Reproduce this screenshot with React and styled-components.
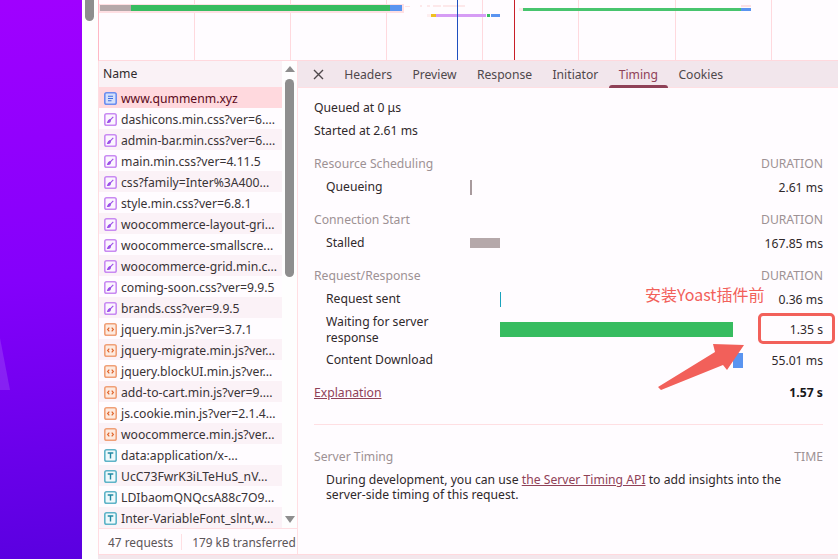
import React from "react";
import styled, { createGlobalStyle } from "styled-components";

const GlobalStyle = createGlobalStyle`
  html, body {
    margin: 0;
    padding: 0;
    height: 100%;
    overflow: hidden;
  }
  body {
    font-family: "Noto Sans", "Noto Sans CJK SC", sans-serif;
    font-size: 12.2px;
    color: #2c2528;
  }
`;

const Page = styled.div`
  display: flex;
  width: 838px;
  height: 559px;
  overflow: hidden;
  position: relative;
`;

const Backdrop = styled.div`
  width: 82px;
  flex: none;
  position: relative;
  overflow: hidden;
  background: linear-gradient(175deg, #a000ff 0%, #8400fb 50%, #5a00e0 100%);
`;

const BackdropShape = styled.div`
  position: absolute;
  left: -30px;
  top: 338px;
  width: 40px;
  height: 52px;
  background: rgba(255, 255, 255, 0.13);
  clip-path: polygon(75% 0, 100% 100%, 0 100%);
`;

const Gutter = styled.div`
  width: 16px;
  flex: none;
  background: #fefefe;
  padding: 0 4px 0 3px;
  box-sizing: border-box;
`;

const GutterThumb = styled.div`
  height: 21px;
  background: #8e8e8e;
  border-radius: 0 0 5px 5px;
`;

const Panel = styled.div`
  flex: 1;
  min-width: 0;
  display: flex;
  flex-direction: column;
  background: #fffcff;
`;

const Overview = styled.div`
  height: 60px;
  flex: none;
  border-left: 1px solid #ffb8c4;
  border-bottom: 1px solid #ffd9de;
  line-height: 0;
`;

const Split = styled.div`
  flex: 1;
  display: flex;
  min-height: 0;
  border-left: 1px solid #ffdde2;
`;

const Sidebar = styled.div`
  width: 199px;
  flex: none;
  display: flex;
  flex-direction: column;
  border-right: 1px solid #ffdfe3;
  box-sizing: border-box;
`;

const ListArea = styled.div`
  flex: 1;
  display: flex;
  min-height: 0;
`;

const NameColumn = styled.div`
  width: 183px;
  flex: none;
`;

const NameHeader = styled.div`
  height: 26px;
  line-height: 25px;
  padding-left: 4px;
  background: #faf2f6;
  color: #302a2c;
`;

const Row = styled.div`
  height: 21px;
  box-sizing: border-box;
  padding: 1px 0 0 5px;
  display: flex;
  align-items: center;
  gap: 4px;
  background: ${(p) => (p.$selected ? "#ffd9de" : p.$odd ? "#fbf2f7" : "#fffcff")};
  color: ${(p) => (p.$selected ? "#5a0a20" : "#393336")};
  white-space: nowrap;
  overflow: hidden;
`;

const ScrollTrack = styled.div`
  width: 15px;
  flex: none;
  display: flex;
  flex-direction: column;
  align-items: center;
  background: #fefefe;
`;

const ScrollThumb = styled.div`
  width: 9px;
  height: 198px;
  margin-top: 7px;
  background: #8e8e8e;
  border-radius: 5px;
`;

const ArrowUp = styled.div`
  margin-top: 5px;
  width: 0;
  height: 0;
  border-left: 5px solid transparent;
  border-right: 5px solid transparent;
  border-bottom: 6px solid #8e8e8e;
`;

const ArrowDown = styled.div`
  margin-top: auto;
  margin-bottom: 5px;
  width: 0;
  height: 0;
  border-left: 5px solid transparent;
  border-right: 5px solid transparent;
  border-top: 7px solid #8e8e8e;
`;

const Footer = styled.div`
  height: 26px;
  flex: none;
  display: flex;
  align-items: center;
  box-sizing: border-box;
  border-top: 1px solid #ffdfe3;
  padding-left: 9px;
  font-size: 11.9px;
  color: #5c5558;
  white-space: nowrap;
`;

const FooterItem = styled.span`
  padding-right: ${(p) => (p.$divider ? 8 : 0)}px;
  margin-right: ${(p) => (p.$divider ? 10 : 0)}px;
  border-right: ${(p) => (p.$divider ? "1px solid #ffdfe3" : "none")};
`;

const BottomStrip = styled.div`
  height: 5px;
  flex: none;
  background: #f3e6ec;
  border-top: 1px solid #ffd9de;
  box-sizing: border-box;
`;

const Detail = styled.div`
  flex: 1;
  display: flex;
  flex-direction: column;
  min-width: 0;
`;

const Tabs = styled.div`
  height: 27px;
  flex: none;
  display: flex;
  align-items: stretch;
  background: #f2e6ec;
  border-bottom: 1px solid #ffdfe3;
  box-sizing: border-box;
  padding-left: 13px;
  font-size: 12.15px;
`;

const CloseButton = styled.div`
  width: 14px;
  margin-right: 9px;
  display: flex;
  align-items: center;
  justify-content: center;
`;

const Tab = styled.div`
  padding: 0 10.2px;
  line-height: 27px;
  position: relative;
  color: ${(p) => (p.$active ? "#8f4157" : "#4f484b")};
  ${(p) =>
    p.$active &&
    `&::after {
      content: "";
      position: absolute;
      left: 0;
      right: 0;
      bottom: -1px;
      height: 3px;
      border-radius: 3px 3px 0 0;
      background: #8f4157;
    }`}
`;

const Body = styled.div`
  flex: 1;
  padding: 0 15px 0 16px;
`;

const Queued = styled.div`
  height: 23px;
  line-height: 23px;
  color: #2f282b;
  &:first-child {
    margin-top: 8px;
  }
`;

const SectionHead = styled.div`
  height: 24px;
  display: flex;
  align-items: center;
  justify-content: space-between;
  color: #9d9194;
  margin: ${(p) => p.$top || 0}px 0 1px;
`;

const TimingRow = styled.div`
  display: grid;
  grid-template-columns: 12px 144px 1fr 70px;
  min-height: ${(p) => p.$h || 22}px;
  align-items: center;
`;

const RowLabel = styled.div`
  grid-column: 2;
  line-height: 16px;
  color: #2f282b;
`;

const BarCell = styled.div`
  height: 15px;
  display: flex;
  align-items: center;
`;

const Bar = styled.div`
  flex: none;
  height: ${(p) => p.$h}px;
  background: ${(p) => p.$color};
  margin-left: ${(p) => p.$left}px;
  width: ${(p) => p.$w}px;
`;

const RowValue = styled.div`
  text-align: right;
  color: #2f282b;
`;

const TotalRow = styled.div`
  display: flex;
  justify-content: space-between;
  align-items: center;
  height: 22px;
  margin-top: 10px;
`;

const Explain = styled.a`
  color: #8f4157;
  text-decoration: underline;
`;

const Total = styled.b`
  color: #17171a;
`;

const Rule = styled.div`
  height: 1px;
  margin: 21px 0 19px;
  background: #ffdfe3;
`;

const Note = styled.div`
  margin: 4px 12px 0;
  line-height: 15px;
  color: #2f282b;
`;

const NoteLink = styled.a`
  color: #8f4157;
  text-decoration: underline;
`;

const Annotation = styled.div`
  position: absolute;
  left: 645px;
  top: 284px;
  font-family: "Noto Sans CJK SC", "Noto Sans", sans-serif;
  font-size: 16px;
  line-height: 20px;
  color: #f2605a;
`;

const Highlight = styled.div`
  position: absolute;
  left: 758px;
  top: 313px;
  width: 77px;
  height: 31px;
  box-sizing: border-box;
  border: 3px solid #f2605a;
  border-radius: 5px;
`;

const ArrowMark = styled.svg`
  position: absolute;
  left: 655px;
  top: 342px;
`;

const ICONS = {
  doc: {
    color: "#6c8eef",
    fill: "#d4e0fb",
    inner: <path d="M4 4.3h5M4 6.5h5M4 8.7h3.5" stroke="#3f6fe0" strokeWidth="1.1" fill="none" />,
  },
  css: {
    color: "#c98bf2",
    fill: "#fbf5fe",
    inner: <path d="M9.3 3.8 5.6 7.6M3.6 9.4c1.5.1 2.7-.3 2.9-1.7l-1-1C4.4 7 4 8.2 3.6 9.4Z" stroke="#9b4fe8" strokeWidth="1.1" fill="#9b4fe8" />,
  },
  js: {
    color: "#f0a078",
    fill: "#fdeadf",
    inner: <path d="M5.3 4.6 3.6 6.5l1.7 1.9M7.7 4.6l1.7 1.9-1.7 1.9" stroke="#e0662e" strokeWidth="1.2" fill="none" />,
  },
  font: {
    color: "#5fb4c8",
    fill: "#eef9fb",
    inner: <path d="M3.7 4h5.6M6.5 4v5.5" stroke="#2188a3" strokeWidth="1.4" fill="none" />,
  },
};

function FileIcon({ type }) {
  const icon = ICONS[type];
  return (
    <svg width="13" height="13" viewBox="0 0 13 13" style={{ flex: "none" }}>
      <rect x="0.8" y="0.8" width="11.4" height="11.4" rx="1.8" fill={icon.fill} stroke={icon.color} strokeWidth="1.6" />
      {icon.inner}
    </svg>
  );
}

const files = [
  ["doc", "www.qummenm.xyz"],
  ["css", "dashicons.min.css?ver=6...."],
  ["css", "admin-bar.min.css?ver=6...."],
  ["css", "main.min.css?ver=4.11.5"],
  ["css", "css?family=Inter%3A400..."],
  ["css", "style.min.css?ver=6.8.1"],
  ["css", "woocommerce-layout-gri..."],
  ["css", "woocommerce-smallscre..."],
  ["css", "woocommerce-grid.min.c..."],
  ["css", "coming-soon.css?ver=9.9.5"],
  ["css", "brands.css?ver=9.9.5"],
  ["js", "jquery.min.js?ver=3.7.1"],
  ["js", "jquery-migrate.min.js?ver..."],
  ["js", "jquery.blockUI.min.js?ver..."],
  ["js", "add-to-cart.min.js?ver=9...."],
  ["js", "js.cookie.min.js?ver=2.1.4..."],
  ["js", "woocommerce.min.js?ver..."],
  ["font", "data:application/x-..."],
  ["font", "UcC73FwrK3iLTeHuS_nV..."],
  ["font", "LDIbaomQNQcsA88c7O9..."],
  ["font", "Inter-VariableFont_slnt,w..."],
];

const tabs = ["Headers", "Preview", "Response", "Initiator", "Timing", "Cookies"];

function OverviewChart() {
  return (
    <svg width="739" height="60" viewBox="0 0 739 60">
      {[95, 191, 287, 383, 479, 576, 672].map((x) => (
        <rect key={x} x={x} y="0" width="1" height="60" fill="#ffd9de" />
      ))}
      <rect x="0" y="4" width="305" height="9" fill="#ffdfe3" />
      <rect x="1" y="5" width="31" height="6" fill="#b5a8aa" />
      <rect x="32" y="5" width="259" height="6" fill="#37bc60" />
      <rect x="291" y="5" width="12" height="6" fill="#5a94f0" />
      <rect x="306" y="6" width="5" height="1" fill="#ffe3e6" />
      <rect x="321" y="5" width="2" height="2" fill="#fde8ea" />
      <rect x="328" y="5" width="3" height="2" fill="#fde8ea" />
      <rect x="334" y="5" width="8" height="2" fill="#fde8ea" />
      <rect x="344" y="5" width="22" height="2" fill="#fde8ea" />
      <rect x="328" y="14" width="4" height="3" fill="#fdeef0" />
      <rect x="332" y="14" width="5" height="3" fill="#f0c020" />
      <rect x="337" y="14" width="50" height="3" fill="#d69cf5" />
      <rect x="388" y="14" width="3" height="3" fill="#37bc60" />
      <rect x="392" y="14" width="9" height="3" fill="#5a94f0" />
      <rect x="358" y="0" width="1" height="60" fill="#1f50c0" />
      <rect x="415" y="0" width="1" height="60" fill="#c81e28" />
      <rect x="420" y="8" width="4" height="3" fill="#fde8ea" />
      <rect x="424" y="8" width="218" height="3" fill="#48c46e" />
      <rect x="642" y="5" width="10" height="2" fill="#fde0e4" />
      <rect x="642" y="8" width="10" height="3" fill="#5a94f0" />
    </svg>
  );
}

export default function App() {
  return (
    <Page>
      <GlobalStyle />
      <Backdrop>
        <BackdropShape />
      </Backdrop>
      <Gutter>
        <GutterThumb />
      </Gutter>
      <Panel>
        <Overview>
          <OverviewChart />
        </Overview>
        <Split>
          <Sidebar>
            <ListArea>
              <NameColumn>
                <NameHeader>Name</NameHeader>
                {files.map(([type, name], i) => (
                  <Row key={name} $selected={i === 0} $odd={i % 2 === 0}>
                    <FileIcon type={type} />
                    <span>{name}</span>
                  </Row>
                ))}
              </NameColumn>
              <ScrollTrack>
                <ArrowUp />
                <ScrollThumb />
                <ArrowDown />
              </ScrollTrack>
            </ListArea>
            <Footer>
              <FooterItem $divider>47 requests</FooterItem>
              <FooterItem>179 kB transferred</FooterItem>
            </Footer>
          </Sidebar>
          <Detail>
            <Tabs>
              <CloseButton>
                <svg width="11" height="11" viewBox="0 0 11 11">
                  <path d="M1 1l9 9M10 1l-9 9" stroke="#4f484b" strokeWidth="1.4" />
                </svg>
              </CloseButton>
              {tabs.map((t) => (
                <Tab key={t} $active={t === "Timing"}>
                  {t}
                </Tab>
              ))}
            </Tabs>
            <Body>
              <Queued>Queued at 0 μs</Queued>
              <Queued>Started at 2.61 ms</Queued>
              <SectionHead $top={9}>
                <span>Resource Scheduling</span>
                <span>DURATION</span>
              </SectionHead>
              <TimingRow>
                <RowLabel>Queueing</RowLabel>
                <BarCell>
                  <Bar $color="#a89a9d" $w={2} $h={15} $left={0} />
                </BarCell>
                <RowValue>2.61 ms</RowValue>
              </TimingRow>
              <SectionHead $top={9}>
                <span>Connection Start</span>
                <span>DURATION</span>
              </SectionHead>
              <TimingRow>
                <RowLabel>Stalled</RowLabel>
                <BarCell>
                  <Bar $color="#b5a8aa" $w={30} $h={10} $left={0} />
                </BarCell>
                <RowValue>167.85 ms</RowValue>
              </TimingRow>
              <SectionHead $top={9}>
                <span>Request/Response</span>
                <span>DURATION</span>
              </SectionHead>
              <TimingRow>
                <RowLabel>Request sent</RowLabel>
                <BarCell>
                  <Bar $color="#1aa3bd" $w={1} $h={15} $left={30} />
                </BarCell>
                <RowValue>0.36 ms</RowValue>
              </TimingRow>
              <TimingRow $h={39}>
                <RowLabel>Waiting for server response</RowLabel>
                <BarCell>
                  <Bar $color="#37bc60" $w={233} $h={15} $left={30} />
                </BarCell>
                <RowValue>1.35 s</RowValue>
              </TimingRow>
              <TimingRow>
                <RowLabel>Content Download</RowLabel>
                <BarCell>
                  <Bar $color="#5a94f0" $w={10} $h={15} $left={263} />
                </BarCell>
                <RowValue>55.01 ms</RowValue>
              </TimingRow>
              <TotalRow>
                <Explain>Explanation</Explain>
                <Total>1.57 s</Total>
              </TotalRow>
              <Rule />
              <SectionHead>
                <span>Server Timing</span>
                <span>TIME</span>
              </SectionHead>
              <Note>
                During development, you can use <NoteLink>the Server Timing API</NoteLink> to add insights into the
                server-side timing of this request.
              </Note>
            </Body>
          </Detail>
        </Split>
        <BottomStrip />
      </Panel>
      <Annotation>安装Yoast插件前</Annotation>
      <Highlight />
      <ArrowMark width="92" height="50" viewBox="0 0 92 50">
        <path d="M3 45 L60 10 L58 2 L89 3 L72 28 L68 23 L6 48 Z" fill="#f2605a" />
      </ArrowMark>
    </Page>
  );
}
